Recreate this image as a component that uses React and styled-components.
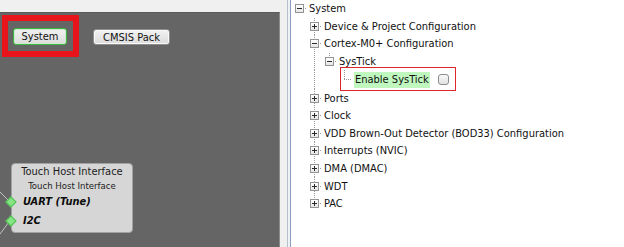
import React from "react";
import styled, { createGlobalStyle } from "styled-components";

const GlobalStyle = createGlobalStyle`
  html, body {
    margin: 0;
    padding: 0;
    background: #ffffff;
  }
  body {
    font-family: "DejaVu Sans Condensed", "DejaVu Sans", sans-serif;
    font-size: 11px;
    color: #111111;
  }
`;

const Screen = styled.div`
  display: flex;
  width: 624px;
  height: 247px;
  overflow: hidden;
`;

const DiagramPane = styled.div`
  width: 280px;
  display: flex;
  flex-direction: column;
  background: #f0f0f0;
`;

const TopStrip = styled.div`
  height: 12px;
`;

const Canvas = styled.div`
  position: relative;
  flex: 1;
  display: flex;
  align-items: flex-start;
  padding: 2px 0 0 2px;
  background: #656565;
  border-top: 1px solid #5a5a5a;
  border-right: 1px solid #8c8c8c;
`;

const Highlight = styled.div`
  box-sizing: border-box;
  width: 77px;
  height: 42px;
  padding: 7px 0 0 5px;
  border: 6px solid #e8141c;
`;

const ToolButton = styled.div`
  box-sizing: border-box;
  display: flex;
  align-items: center;
  justify-content: center;
  width: ${p => p.$width}px;
  height: ${p => p.$height}px;
  margin: ${p => p.$margin || "0"};
  border: 1px solid ${p => (p.$active ? "#3cb83c" : "#8e8e8e")};
  border-radius: 3px;
  background: linear-gradient(#f2f2f2, #dcdcdc);
  box-shadow: inset 0 0 0 1px ${p => (p.$active ? "#cfe9cf" : "#fafafa")};
  color: #111;
  font-size: 11px;
`;

const Wires = styled.svg`
  position: absolute;
  left: 0;
  top: 0;
  width: 40px;
  height: 234px;
`;

const Node = styled.div`
  position: absolute;
  left: 11px;
  top: 150px;
  box-sizing: border-box;
  width: 122px;
  height: 70px;
  padding-top: 1px;
  background: #d6d6d6;
  border: 1px solid #a2a2a2;
  border-radius: 4px;
`;

const NodeTitle = styled.div`
  text-align: center;
  line-height: 14px;
  font-size: ${p => (p.$small ? "9.5px" : "11px")};
  color: #1c1c1c;
`;

const Port = styled.div`
  position: relative;
  height: ${p => p.$height}px;
  line-height: ${p => p.$height}px;
  padding-left: 11px;
  font-weight: bold;
  font-style: italic;
  color: #0c0c0c;

  &::before {
    content: "";
    position: absolute;
    left: -5px;
    top: 50%;
    width: 6px;
    height: 6px;
    margin-top: -4px;
    background: #86e486;
    border: 1px solid #4fbf4f;
    transform: rotate(45deg);
  }
`;

const Splitter = styled.div`
  width: 11px;
  background: linear-gradient(
    to right,
    #f0f0f0 0 7px,
    #b6c0cd 7px 8px,
    #eef1f5 8px 10px,
    #8a9fbd 10px 11px
  );
`;

const TreePane = styled.div`
  flex: 1;
  background: #ffffff;
  padding-left: 4px;
`;

const Row = styled.div`
  position: relative;
  display: flex;
  align-items: stretch;
  height: ${p => p.$height || 17.6}px;
  white-space: nowrap;
`;

const dots = "repeating-linear-gradient(to bottom, #9a9a9a 0 1px, transparent 1px 2px)";
const hdots = "repeating-linear-gradient(to right, #9a9a9a 0 1px, transparent 1px 2px)";

const Guide = styled.div`
  width: 15px;
  flex: none;
  background: ${p => (p.$show ? dots : "none")};
  background-size: 1px 100%;
  background-position: 4px 0;
  background-repeat: no-repeat;
`;

const Joint = styled.div`
  width: 14px;
  flex: none;
  display: flex;
  align-items: center;
  background-image: ${p => (p.$root ? hdots : `${dots}, ${hdots}`)};
  background-size: ${p => (p.$root ? "8px 1px" : `1px ${p.$last ? "50%" : "100%"}, 8px 1px`)};
  background-position: ${p => (p.$root ? "4px 50%" : "4px 0, 4px 50%")};
  background-repeat: no-repeat;
`;

const Expander = styled.div`
  position: relative;
  box-sizing: border-box;
  width: 9px;
  height: 9px;
  background: linear-gradient(#ffffff, #e6e6e6);
  border: 1px solid #949494;

  &::before {
    content: "";
    position: absolute;
    left: 1px;
    top: 3px;
    width: 5px;
    height: 1px;
    background: #2a2a2a;
  }

  &::after {
    content: "";
    display: ${p => (p.$open ? "none" : "block")};
    position: absolute;
    left: 3px;
    top: 1px;
    width: 1px;
    height: 5px;
    background: #2a2a2a;
  }
`;

const Label = styled.div`
  display: flex;
  align-items: center;
`;

const Marked = styled.span`
  display: flex;
  align-items: center;
  height: 16px;
  padding: 0 1px;
  background: #bff7bf;
`;

const CheckBox = styled.span`
  box-sizing: border-box;
  width: 11px;
  height: 11px;
  margin-left: 8px;
  border: 1px solid #8c8c8c;
  border-radius: 3px;
  background: linear-gradient(#f8f8f8, #e2e2e2);
`;

const Callout = styled.div`
  position: absolute;
  left: 45px;
  top: -3px;
  width: 116px;
  height: 24px;
  box-sizing: border-box;
  border: 1px solid #e0242c;
  pointer-events: none;
`;

const treeRows = [
  { label: "System", level: 0, open: true, root: true },
  { label: "Device & Project Configuration", level: 1 },
  { label: "Cortex-M0+ Configuration", level: 1, open: true },
  { label: "SysTick", level: 2, open: true, last: true, guides: [false, true] },
  { label: "Enable SysTick", level: 3, leaf: true, last: true, guides: [false, true, false], check: true },
  { label: "Ports", level: 1 },
  { label: "Clock", level: 1 },
  { label: "VDD Brown-Out Detector (BOD33) Configuration", level: 1 },
  { label: "Interrupts (NVIC)", level: 1 },
  { label: "DMA (DMAC)", level: 1 },
  { label: "WDT", level: 1 },
  { label: "PAC", level: 1, last: true },
];

const TreeRow = ({ row }) => {
  const guides = row.guides || Array.from({ length: row.level }, () => false);
  return (
    <Row $height={row.check ? 19 : 17.6}>
      {guides.map((g, i) => (
        <Guide key={i} $show={g} />
      ))}
      <Joint $root={row.root} $last={row.last}>
        {!row.leaf && <Expander $open={row.open} />}
      </Joint>
      <Label>
        {row.check ? (
          <>
            <Marked>{row.label}</Marked>
            <CheckBox />
          </>
        ) : (
          row.label
        )}
      </Label>
      {row.check && <Callout />}
    </Row>
  );
};

export default function App() {
  return (
    <Screen>
      <GlobalStyle />
      <DiagramPane>
        <TopStrip />
        <Canvas>
          <Highlight>
            <ToolButton $active $width={54} $height={17}>
              System
            </ToolButton>
          </Highlight>
          <ToolButton $width={77} $height={16} $margin="14px 0 0 14px">
            CMSIS Pack
          </ToolButton>
          <Wires viewBox="0 0 40 234">
            <line x1="0" y1="179" x2="9" y2="188" stroke="#c4c4c4" strokeWidth="1" />
            <line x1="0" y1="221" x2="9" y2="209" stroke="#c4c4c4" strokeWidth="1" />
          </Wires>
          <Node>
            <NodeTitle>Touch Host Interface</NodeTitle>
            <NodeTitle $small>Touch Host Interface</NodeTitle>
            <Port $height={18}>UART (Tune)</Port>
            <Port $height={19}>I2C</Port>
          </Node>
        </Canvas>
      </DiagramPane>
      <Splitter />
      <TreePane>
        {treeRows.map(row => (
          <TreeRow key={row.label} row={row} />
        ))}
      </TreePane>
    </Screen>
  );
}
